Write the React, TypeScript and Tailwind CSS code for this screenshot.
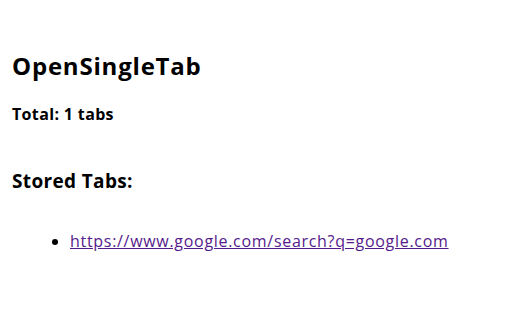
export default function App() {
  return (
    <div className="min-h-[320px] w-[512px] bg-white px-[12px] pt-[52px] text-black" style={{ fontFamily: '"Open Sans", sans-serif' }}>
      <h1 className="text-[24px] font-bold leading-[28px] tracking-[0.8px]">OpenSingleTab</h1>
      <p className="mt-[24px] text-[16px] font-bold leading-[20px] tracking-[0.35px]">Total: 1 tabs</p>
      <h3 className="mt-[45px] text-[19px] font-bold leading-[24px] tracking-[0.35px]">Stored Tabs:</h3>
      <ul className="mt-[38px] list-disc pl-[58px] text-[16px] leading-[20px]">
        <li>
          <a href="#" className="tracking-[0.7px] text-[#551a8b] underline">
            https://www.google.com/search?q=google.com
          </a>
        </li>
      </ul>
    </div>
  );
}
